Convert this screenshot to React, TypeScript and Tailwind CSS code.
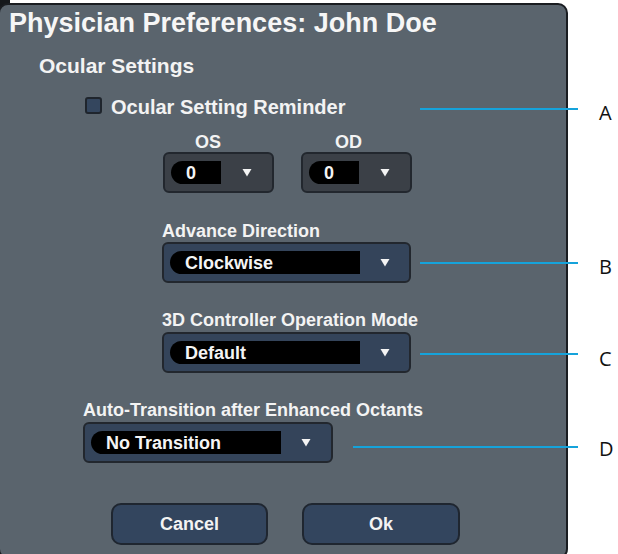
import React from "react";

const Arrow = () => (
  <svg width="10" height="9" viewBox="0 0 10 9">
    <polygon points="0.5,1 9.5,1 5,8.5" fill="#f4f4f4" />
  </svg>
);

function Dropdown({ value, fieldW, boxW, dark }: { value: string; fieldW: number; boxW: number; dark?: boolean }) {
  return (
    <div
      className={
        "flex items-center h-[41px] rounded-[6px] border-2 border-[#22272e] pl-[6px] " +
        (dark ? "bg-[#3b4047]" : "bg-[#34445a]")
      }
      style={{ width: boxW }}
    >
      <div
        className="h-[23px] bg-black rounded-l-full flex items-center pl-[15px] text-[18px] leading-none font-bold text-[#f4f4f4]"
        style={{ width: fieldW }}
      >
        {value}
      </div>
      <div className="flex-1 flex items-center justify-center">
        <Arrow />
      </div>
    </div>
  );
}

export default function App() {
  const font = { fontFamily: '"Liberation Sans", Arial, sans-serif' };
  return (
    <div className="relative w-[618px] h-[554px] bg-white overflow-hidden" style={font}>
      <div className="absolute left-0 top-0 w-[10px] h-[12px] bg-[#15181b]" />
      <div className="absolute left-0 bottom-0 w-[10px] h-[12px] bg-[#15181b]" />
      <div className="relative ml-[-2px] mt-[3px] w-[570px] h-[556px] rounded-[10px] border-2 border-[#1a1d21] bg-[#5a646d] text-[#f3f3f3]">
        <div className="pl-[9px] flex flex-col">
          <div className="mt-[5px] text-[27px] leading-[27px] font-bold text-[#f6f6f6]">Physician Preferences: John Doe</div>
          <div className="mt-[18px] ml-[30px] text-[21px] leading-[21px] font-bold">Ocular Settings</div>
          <div className="mt-[21px] ml-[76px] flex items-start">
            <div className="w-[17px] h-[17px] rounded-[3px] border-2 border-[#1f252d] bg-[#34465e]" />
            <div className="ml-[9px] text-[20px] leading-[20px] font-bold">Ocular Setting Reminder</div>
          </div>
          <div className="mt-[16px] flex">
            <div className="ml-[154px] w-[110px] flex flex-col">
              <div className="ml-[32px] text-[18px] leading-[18px] font-bold">OS</div>
              <div className="mt-[1px]">
                <Dropdown value="0" fieldW={50} boxW={111} dark />
              </div>
            </div>
            <div className="ml-[28px] w-[111px] flex flex-col">
              <div className="ml-[34px] text-[18px] leading-[18px] font-bold">OD</div>
              <div className="mt-[1px]">
                <Dropdown value="0" fieldW={50} boxW={111} dark />
              </div>
            </div>
          </div>
          <div className="ml-[153px] flex flex-col">
            <div className="mt-[29px] text-[18px] leading-[18px] font-bold">Advance Direction</div>
            <div className="mt-[2px]">
              <Dropdown value="Clockwise" fieldW={190} boxW={249} />
            </div>
            <div className="mt-[28px] text-[18px] leading-[18px] font-bold">3D Controller Operation Mode</div>
            <div className="mt-[3px]">
              <Dropdown value="Default" fieldW={190} boxW={249} />
            </div>
          </div>
          <div className="ml-[74px] flex flex-col">
            <div className="mt-[28px] text-[18px] leading-[18px] font-bold">Auto-Transition after Enhanced Octants</div>
            <div className="mt-[3px]">
              <Dropdown value="No Transition" fieldW={190} boxW={250} />
            </div>
          </div>
          <div className="mt-[40px] ml-[102px] flex gap-[34px]">
            <button className="w-[157px] h-[42px] rounded-[10px] border-2 border-[#1f2630] bg-[#33455e] text-[18px] font-bold text-[#f3f3f3]">Cancel</button>
            <button className="w-[158px] h-[42px] rounded-[10px] border-2 border-[#1f2630] bg-[#33455e] text-[18px] font-bold text-[#f3f3f3]">Ok</button>
          </div>
        </div>
      </div>

      <div className="absolute left-[420px] top-[108px] w-[158px] h-[2px] bg-[#15a3db]" />
      <div className="absolute left-[420px] top-[262px] w-[158px] h-[2px] bg-[#15a3db]" />
      <div className="absolute left-[420px] top-[353px] w-[158px] h-[2px] bg-[#15a3db]" />
      <div className="absolute left-[353px] top-[446px] w-[225px] h-[2px] bg-[#15a3db]" />
      {[
        ["A", 101],
        ["B", 255],
        ["C", 347],
        ["D", 437],
      ].map(([l, t]) => (
        <div
          key={l as string}
          className="absolute left-[599px] text-[20px] leading-[24px] text-[#111]"
          style={{ top: t as number, fontFamily: '"Open Sans", "Noto Sans", sans-serif' }}
        >
          {l}
        </div>
      ))}
    </div>
  );
}
